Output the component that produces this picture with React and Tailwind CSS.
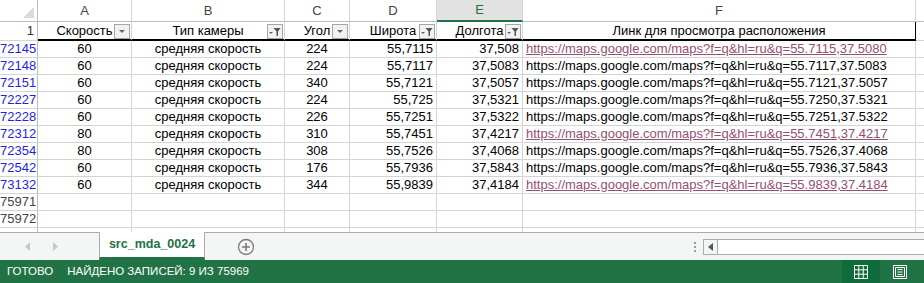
import React from 'react';

const cols = [
  { letter: 'A', w: 'w-[94px]', title: 'Скорость', filter: 'plain', align: 'text-center' },
  { letter: 'B', w: 'w-[153px]', title: 'Тип камеры', filter: 'on', align: 'text-center' },
  { letter: 'C', w: 'w-[65px]', title: 'Угол', filter: 'plain', align: 'text-center' },
  { letter: 'D', w: 'w-[87px]', title: 'Широта', filter: 'on', align: 'text-right pr-[3px]' },
  { letter: 'E', w: 'w-[86px]', title: 'Долгота', filter: 'on', align: 'text-right pr-[3px]', selected: true },
  { letter: 'F', w: 'w-[393px]', title: 'Линк для просмотра расположения', filter: null, align: 'text-left pl-[3px]' },
];

const rows = [
  { n: '72145', a: '60', c: '224', d: '55,7115', e: '37,508', q: '55.7115,37.5080', visited: true },
  { n: '72148', a: '60', c: '224', d: '55,7117', e: '37,5083', q: '55.7117,37.5083' },
  { n: '72151', a: '60', c: '340', d: '55,7121', e: '37,5057', q: '55.7121,37.5057' },
  { n: '72227', a: '60', c: '224', d: '55,725', e: '37,5321', q: '55.7250,37.5321' },
  { n: '72228', a: '60', c: '226', d: '55,7251', e: '37,5322', q: '55.7251,37.5322' },
  { n: '72312', a: '80', c: '310', d: '55,7451', e: '37,4217', q: '55.7451,37.4217', visited: true },
  { n: '72354', a: '80', c: '308', d: '55,7526', e: '37,4068', q: '55.7526,37.4068' },
  { n: '72542', a: '60', c: '176', d: '55,7936', e: '37,5843', q: '55.7936,37.5843' },
  { n: '73132', a: '60', c: '344', d: '55,9839', e: '37,4184', q: '55.9839,37.4184', visited: true },
];

const FilterButton = ({ on }) => (
  <div className="absolute right-[1px] top-[2px] w-[16px] h-[15px] border border-[#a6a6a6] bg-[#f1f1f1] flex items-center justify-center">
    <svg width="14" height="13" viewBox="0 0 14 13">
      {on ? (
        <>
          <polygon points="1,7 5,7 3,9" fill="#666" />
          <polygon points="5.5,3 12.5,3 10,6.5 10,11 8.5,11 8.5,6.5" fill="#555" />
        </>
      ) : (
        <polygon points="4,5 10,5 7,8" fill="#666" />
      )}
    </svg>
  </div>
);

const Cell = ({ w, className = '', children }) => (
  <div className={`${w} flex-none h-full border-r border-b border-[#d4d4d4] whitespace-nowrap overflow-hidden leading-[16px] ${className}`}>
    {children}
  </div>
);

export default function App() {
  return (
    <div className="w-[924px] h-[283px] overflow-hidden flex flex-col bg-white text-[13px] text-black font-['Liberation_Sans',Arial,sans-serif]">
      {/* Grid */}
      <div className="h-[232px] overflow-hidden flex-none">
        {/* column letters */}
        <div className="flex h-[22px]">
          <div className="w-[38px] flex-none h-full border-r border-b border-[#bdbdbd] relative">
            <svg className="absolute right-[3px] bottom-[3px]" width="11" height="11" viewBox="0 0 11 11">
              <polygon points="11,0 11,11 0,11" fill="#dadada" />
            </svg>
          </div>
          {cols.map((c) => (
            <div
              key={c.letter}
              className={`${c.w} flex-none h-full flex items-center justify-center border-r border-[#d4d4d4] ${
                c.selected ? 'bg-[#e2e2e2] text-[#217346] border-b-2 border-b-[#217346]' : 'text-[#444] border-b border-b-[#bdbdbd]'
              }`}
            >
              {c.letter}
            </div>
          ))}
          <div className="flex-1 h-full border-b border-[#bdbdbd]" />
        </div>

        {/* header row 1 */}
        <div className="flex h-[19px]">
          <div className="w-[38px] flex-none h-full border-r border-[#bdbdbd] border-b border-b-[#d4d4d4] text-right pr-[3px] text-[#333] leading-[18px]">
            1
          </div>
          {cols.map((c, i) => (
            <div
              key={c.letter}
              className={`${c.w} flex-none h-full relative text-center leading-[18px] whitespace-nowrap border-b-2 border-b-black border-r ${
                i === cols.length - 1 ? 'border-r-black' : 'border-r-[#d4d4d4]'
              }`}
            >
              {c.title}
              {c.filter && <FilterButton on={c.filter === 'on'} />}
            </div>
          ))}
          <div className="flex-1 h-full border-b border-[#d4d4d4]" />
        </div>

        {/* data rows */}
        {rows.map((r) => (
          <div key={r.n} className="flex h-[17px]">
            <Cell w="w-[38px]" className="text-right pr-[3px] text-[#1f1fe6] border-r-[#bdbdbd]">
              {r.n}
            </Cell>
            <Cell w="w-[94px]" className="text-center">{r.a}</Cell>
            <Cell w="w-[153px]" className="text-center">средняя скорость</Cell>
            <Cell w="w-[65px]" className="text-center">{r.c}</Cell>
            <Cell w="w-[87px]" className="text-right pr-[3px]">{r.d}</Cell>
            <Cell w="w-[86px]" className="text-right pr-[3px]">{r.e}</Cell>
            <Cell w="w-[393px]" className={`pl-[3px] ${r.visited ? 'text-[#954f72] underline' : ''}`}>
              https://maps.google.com/maps?f=q&amp;hl=ru&amp;q={r.q}
            </Cell>
            <div className="flex-1 h-full border-b border-[#d4d4d4]" />
          </div>
        ))}

        {['75971', '75972', ''].map((n) => (
          <div key={n || 'last'} className="flex h-[17px]">
            <Cell w="w-[38px]" className="text-right pr-[3px] text-[#444] border-r-[#bdbdbd]">
              {n}
            </Cell>
            {cols.map((c) => (
              <Cell key={c.letter} w={c.w} />
            ))}
            <div className="flex-1 h-full border-b border-[#d4d4d4]" />
          </div>
        ))}
      </div>

      {/* Sheet tabs */}
      <div className="h-[28px] flex-none flex items-stretch bg-[#f4f5f5] border-t border-[#ababab]">
        <div className="w-[99px] flex-none flex items-center">
          <svg className="ml-[25px]" width="6" height="9" viewBox="0 0 6 9">
            <polygon points="5,0 5,9 0,4.5" fill="#c8c8c8" />
          </svg>
          <svg className="ml-[22px]" width="6" height="9" viewBox="0 0 6 9">
            <polygon points="0,0 0,9 5,4.5" fill="#c8c8c8" />
          </svg>
        </div>
        <div className="w-[106px] flex-none -mt-px bg-white border-x border-[#ababab] border-b-[3px] border-b-[#217346] flex items-center justify-center font-bold text-[#217346] text-[12.5px]">
          src_mda_0024
        </div>
        <div className="w-[482px] flex-none flex items-center">
          <svg className="ml-[32px]" width="18" height="18" viewBox="0 0 18 18">
            <circle cx="9" cy="9" r="7.5" fill="none" stroke="#7a7a7a" strokeWidth="1.3" />
            <path d="M9 5v8M5 9h8" stroke="#7a7a7a" strokeWidth="1.6" />
          </svg>
        </div>
        <div className="w-[16px] flex-none flex flex-col items-center justify-center gap-[2px]">
          <div className="w-[2px] h-[2px] bg-[#9a9a9a]" />
          <div className="w-[2px] h-[2px] bg-[#9a9a9a]" />
          <div className="w-[2px] h-[2px] bg-[#9a9a9a]" />
        </div>
        <div className="flex-1 flex items-start pt-[6px]">
          <div className="w-full h-[16px] flex border border-r-0 border-[#ababab] bg-white">
            <div className="w-[14px] flex-none h-full border-r border-[#ababab] bg-[#f4f5f5] flex items-center justify-center">
              <svg width="5" height="8" viewBox="0 0 5 8">
                <polygon points="5,0 5,8 0,4" fill="#555" />
              </svg>
            </div>
          </div>
        </div>
      </div>

      {/* Status bar */}
      <div className="flex-1 flex items-center bg-[#217346] text-white text-[11.5px]">
        <span className="ml-[7px]">ГОТОВО</span>
        <span className="ml-[14px]">НАЙДЕНО ЗАПИСЕЙ: 9 ИЗ 75969</span>
        <div className="ml-auto h-full flex items-stretch">
          <div className="w-[38px] bg-[#0f6b39] flex items-center justify-center">
            <svg width="14" height="14" viewBox="0 0 14 14">
              <path d="M0.5 0.5h13v13h-13zM0.5 4.8h13M0.5 9.2h13M4.8 0.5v13M9.2 0.5v13" fill="none" stroke="#fff" strokeWidth="1" />
            </svg>
          </div>
          <div className="w-[44px] flex items-center pl-[13px]">
            <svg width="14" height="14" viewBox="0 0 14 14">
              <path d="M0.5 0.5h13v13h-13zM2.5 2.5h9v9h-9zM4.5 4.5h5M4.5 7h5M4.5 9.5h5" fill="none" stroke="#fff" strokeWidth="1" />
            </svg>
          </div>
        </div>
      </div>
    </div>
  );
}
